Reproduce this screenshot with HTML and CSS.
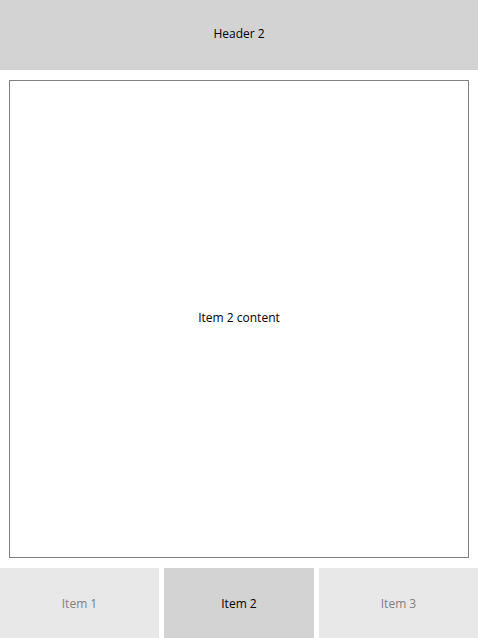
FILE: index.html
```html
<!DOCTYPE html>
<html>
<head>
<meta charset="utf-8">
<link rel="stylesheet" href="styles.css">
</head>
<body>
<div class="app">
  <header class="header">Header 2</header>
  <main class="main">
    <div class="panel">Item 2 content</div>
  </main>
  <nav class="tabs">
    <div class="tab">Item 1</div>
    <div class="tab active">Item 2</div>
    <div class="tab">Item 3</div>
  </nav>
</div>
</body>
</html>
```
FILE: styles.css
```css
html, body {
  margin: 0;
  padding: 0;
  background: #ffffff;
}
body {
  font-family: "Open Sans", "Noto Sans", sans-serif;
  font-size: 12px;
  color: #000;
}
.app {
  display: flex;
  flex-direction: column;
  height: 638px;
}
.header {
  height: 70px;
  box-sizing: border-box;
  padding-bottom: 4px;
  background: #d3d3d3;
  display: flex;
  align-items: center;
  justify-content: center;
}
.main {
  flex: 1;
  display: flex;
  padding: 10px 9px;
}
.panel {
  flex: 1;
  border: 1px solid #808080;
  padding-bottom: 4px;
  display: flex;
  align-items: center;
  justify-content: center;
}
.tabs {
  height: 70px;
  display: grid;
  grid-template-columns: 1fr 150px 1fr;
  gap: 5px;
}
.tab {
  background: #e8e8e8;
  color: #808080;
  display: flex;
  align-items: center;
  justify-content: center;
}
.tab.active {
  background: #d3d3d3;
  color: #000;
}
```
